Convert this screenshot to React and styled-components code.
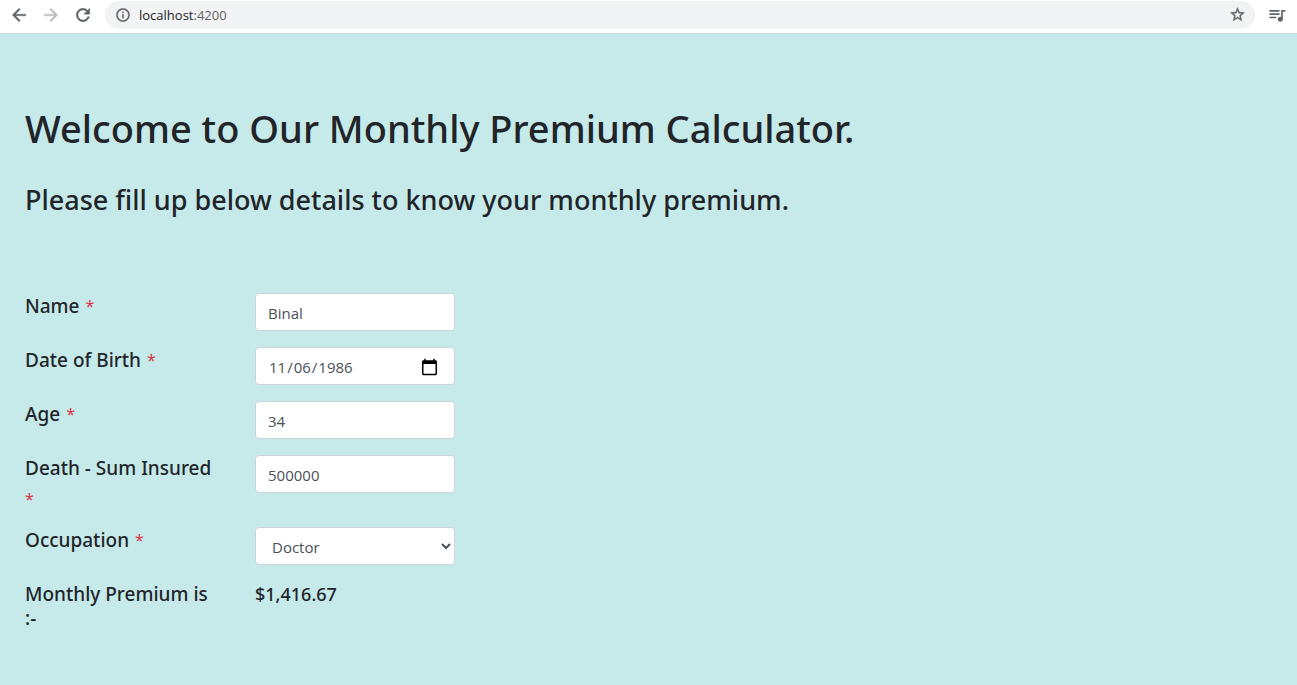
import React, { useState } from "react";
import styled, { createGlobalStyle } from "styled-components";

const GlobalStyle = createGlobalStyle`
  *, *::before, *::after { box-sizing: border-box; }
  body {
    margin: 0;
    background: #c6eae9;
    color: #212529;
    font-family: "Noto Sans", "Open Sans", sans-serif;
    font-size: 16px;
  }
`;

const Toolbar = styled.header`
  display: flex;
  align-items: center;
  height: 34px;
  padding: 0 8px 4px 7px;
  border-bottom: 1px solid #d0dcdc;
  background: #fff;
`;

const Icon = styled.svg`
  display: block;
  flex: none;
  fill: currentColor;
  stroke: currentColor;
  stroke-width: ${(p) => p.$weight || 0};
`;

const IconButton = styled.button`
  display: flex;
  align-items: center;
  justify-content: center;
  flex: none;
  width: 24px;
  height: 24px;
  padding: 0;
  border: 0;
  background: none;
  color: ${(p) => (p.disabled ? "#babcbe" : "#5f6368")};
`;

const NavButtons = styled.nav`
  display: flex;
  width: 98px;
  gap: 8px;
`;

const AddressBar = styled.div`
  display: flex;
  flex: 1;
  align-items: center;
  height: 28px;
  padding: 0 6px 0 10px;
  margin-right: 10px;
  border-radius: 14px;
  background: #f1f3f4;
  color: #5f6368;
`;

const Address = styled.span`
  flex: 1;
  margin-left: 8px;
  font-family: "Open Sans", sans-serif;
  font-size: 13px;
  line-height: 20px;
`;

const Host = styled.span`
  color: #202124;
`;

const Page = styled.main`
  padding: 70px 25px 40px;
`;

const Title = styled.h1`
  margin: 0;
  font-size: 38px;
  font-weight: 500;
  line-height: 48px;
`;

const Subtitle = styled.h2`
  margin: 31px 0 0;
  font-size: 27px;
  font-weight: 500;
  line-height: 34px;
`;

const Form = styled.form`
  display: flex;
  flex-direction: column;
  gap: 16px;
  margin-top: 76px;
`;

const Row = styled.div`
  display: grid;
  grid-template-columns: 190px 200px;
  column-gap: 40px;
  align-items: start;
  min-height: 38px;
`;

const Label = styled.label`
  display: flex;
  flex-wrap: wrap;
  gap: 7px 6px;
  padding-top: 1px;
  font-size: 19px;
  font-weight: 500;
  line-height: 24px;
`;

const Required = styled.span`
  color: #dc3545;
  font-size: 16px;
  font-weight: 400;
`;

const controlStyle = `
  width: 100%;
  height: 38px;
  padding: 7px 12px 5px;
  border: 1px solid #ced4da;
  border-radius: 4px;
  background: #fff;
  color: #495057;
  font-family: "Open Sans", sans-serif;
  font-size: 15px;
  line-height: 24px;
`;

const Input = styled.input`
  ${controlStyle}

  &::-webkit-calendar-picker-indicator {
    width: 19px;
    height: 19px;
    margin-right: 1px;
  }
`;

const Select = styled.select`
  ${controlStyle}
`;

const ResultText = styled.div`
  padding-top: 1px;
  font-size: 19px;
  font-weight: 500;
  line-height: 24px;
`;

const Amount = styled.output`
  padding-top: 1px;
  font-size: 18px;
  font-weight: 500;
  line-height: 24px;
`;

const ICONS = {
  back: "M20 11H7.83l5.59-5.59L12 4l-8 8 8 8 1.41-1.41L7.83 13H20v-2z",
  forward: "M12 4l-1.41 1.41L16.17 11H4v2h12.17l-5.58 5.59L12 20l8-8z",
  reload:
    "M17.65 6.35C16.2 4.9 14.21 4 12 4c-4.42 0-7.99 3.58-7.99 8s3.57 8 7.99 8c3.73 0 6.84-2.55 7.73-6h-2.08c-.82 2.33-3.04 4-5.65 4-3.31 0-6-2.69-6-6s2.69-6 6-6c1.66 0 3.14.69 4.22 1.78L13 11h7V4l-2.35 2.35z",
  info:
    "M11 7h2v2h-2zm0 4h2v6h-2zm1-9C6.48 2 2 6.48 2 12s4.48 10 10 10 10-4.48 10-10S17.52 2 12 2zm0 18c-4.41 0-8-3.59-8-8s3.59-8 8-8 8 3.59 8 8-3.59 8-8 8z",
  star:
    "M22 9.24l-7.19-.62L12 2 9.19 8.63 2 9.24l5.46 4.73L5.82 21 12 17.27 18.18 21l-1.63-7.03L22 9.24zM12 15.4l-3.76 2.27 1-4.28-3.32-2.88 4.38-.38L12 6.1l1.71 4.04 4.38.38-3.32 2.88 1 4.28L12 15.4z",
  music:
    "M15 6H3v2h12V6zm0 4H3v2h12v-2zM3 16h8v-2H3v2zM17 6v8.18c-.31-.11-.65-.18-1-.18-1.66 0-3 1.34-3 3s1.34 3 3 3 3-1.34 3-3V8h3V6h-5z",
};

function Glyph({ name, size, weight }) {
  return (
    <Icon viewBox="0 0 24 24" width={size} height={size} $weight={weight} aria-hidden="true">
      <path d={ICONS[name]} />
    </Icon>
  );
}

function Field({ id, label, children }) {
  return (
    <Row>
      <Label htmlFor={id}>
        <span>{label}</span>
        <Required>*</Required>
      </Label>
      {children}
    </Row>
  );
}

export default function App() {
  const [values, setValues] = useState({
    name: "Binal",
    dob: "1986-11-06",
    age: "34",
    sum: "500000",
    occupation: "Doctor",
  });
  const bind = (key) => ({
    id: key,
    value: values[key],
    onChange: (e) => setValues({ ...values, [key]: e.target.value }),
  });

  return (
    <>
      <GlobalStyle />
      <Toolbar>
        <NavButtons>
          <IconButton aria-label="Back"><Glyph name="back" size={20} weight={0.5} /></IconButton>
          <IconButton aria-label="Forward" disabled><Glyph name="forward" size={20} weight={0.5} /></IconButton>
          <IconButton aria-label="Reload"><Glyph name="reload" size={20} weight={0.5} /></IconButton>
        </NavButtons>
        <AddressBar>
          <Glyph name="info" size={16} weight={0.4} />
          <Address><Host>localhost</Host>:4200</Address>
          <IconButton aria-label="Bookmark"><Glyph name="star" size={17} weight={0.5} /></IconButton>
        </AddressBar>
        <IconButton aria-label="Media controls"><Glyph name="music" size={20} /></IconButton>
      </Toolbar>
      <Page>
        <Title>Welcome to Our Monthly Premium Calculator.</Title>
        <Subtitle>Please fill up below details to know your monthly premium.</Subtitle>
        <Form onSubmit={(e) => e.preventDefault()}>
          <Field id="name" label="Name"><Input type="text" {...bind("name")} /></Field>
          <Field id="dob" label="Date of Birth"><Input type="date" {...bind("dob")} /></Field>
          <Field id="age" label="Age"><Input type="text" {...bind("age")} /></Field>
          <Field id="sum" label="Death - Sum Insured"><Input type="text" {...bind("sum")} /></Field>
          <Field id="occupation" label="Occupation">
            <Select {...bind("occupation")}>
              <option>Doctor</option>
            </Select>
          </Field>
          <Row>
            <ResultText>Monthly Premium is :-</ResultText>
            <Amount>$1,416.67</Amount>
          </Row>
        </Form>
      </Page>
    </>
  );
}
